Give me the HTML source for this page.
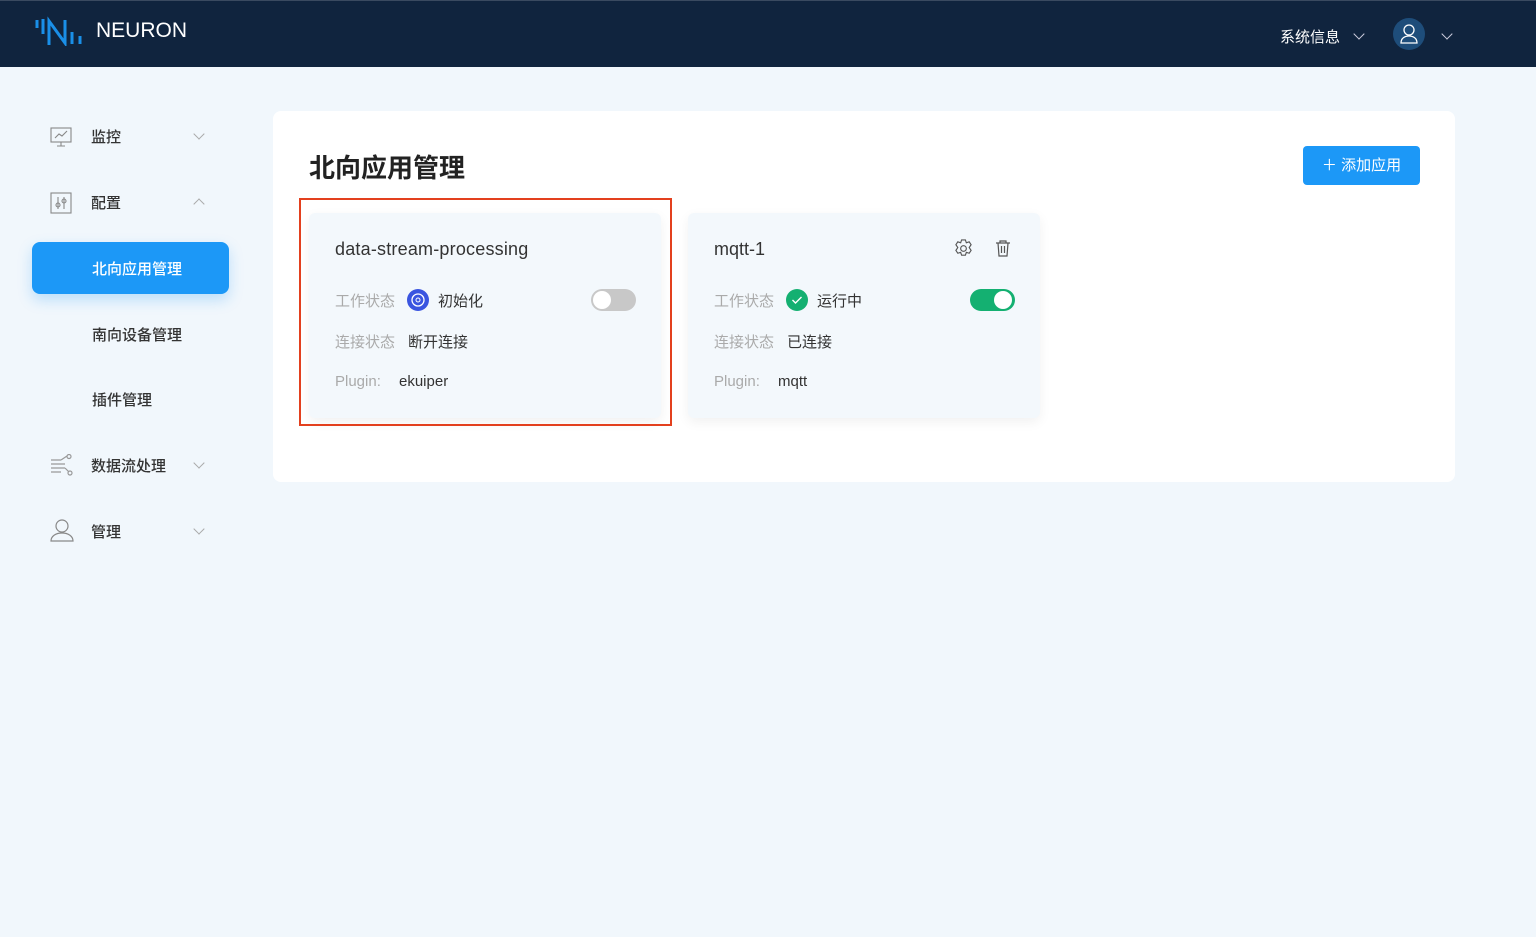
<!DOCTYPE html>
<html><head><meta charset="utf-8"><style>
*{box-sizing:border-box;margin:0;padding:0}
body{width:1536px;height:937px;background:#f1f7fc;font-family:"Liberation Sans","Noto Sans CJK SC",sans-serif;position:relative;overflow:hidden;color:#333}
.hdr{position:absolute;left:0;top:0;width:1536px;height:67px;background:#10243e;border-top:1px solid #3a4a60}
.abs{position:absolute}
.menu{position:absolute;left:91px;font-size:15px;color:#333;font-weight:500}
.chev{position:absolute;left:195px;width:8px;height:8px;border-right:1px solid #aaa;border-bottom:1px solid #aaa}
.panel{position:absolute;left:273px;top:111px;width:1182px;height:371px;background:#fff;border-radius:8px}
.card{position:absolute;top:213px;width:352px;height:205px;background:#f3f8fc;border-radius:6px;box-shadow:0 4px 12px rgba(0,0,0,0.06)}
.lbl{position:absolute;font-size:15px;color:#aaa}
.val{position:absolute;font-size:15px;color:#333}
</style></head><body>
<div class="hdr">
<svg class="abs" style="left:34px;top:15px" width="52" height="30" viewBox="0 0 52 30"><g stroke="#1a8fe8" stroke-width="3"><line x1="3" y1="4" x2="3" y2="12"/><line x1="9" y1="3" x2="9" y2="18"/><path d="M15 29V5L31 27V4" fill="none"/><line x1="38" y1="16" x2="38" y2="28"/><line x1="46" y1="20" x2="46" y2="28"/></g></svg>
<div class="abs" style="left:96px;top:18px;font-size:21px;color:#fff">NEURON</div>
<div class="abs" style="left:1280px;top:25px;font-size:15px;color:#fff">系统信息</div>
<div class="abs" style="left:1355px;top:29px;width:8px;height:8px;border-right:1.5px solid #ccd;border-bottom:1.5px solid #ccd;transform:rotate(45deg)"></div>
<div class="abs" style="left:1393px;top:17px;width:32px;height:32px;border-radius:50%;background:#1e4d7a"></div>
<svg class="abs" style="left:1399px;top:22px" width="20" height="22" viewBox="0 0 20 22" fill="none" stroke="#fff" stroke-width="1.3"><circle cx="10" cy="7" r="5"/><path d="M2 20c0-5 4-7 8-7s8 2 8 7z"/></svg>
<div class="abs" style="left:1443px;top:29px;width:8px;height:8px;border-right:1.5px solid #ccd;border-bottom:1.5px solid #ccd;transform:rotate(45deg)"></div>
</div>
<svg class="abs" style="left:50px;top:126px" width="22" height="22" viewBox="0 0 22 22" fill="none" stroke="#888" stroke-width="1.1"><rect x="1" y="2" width="20" height="14"/><path d="M5 12l4-4 3 2 5-5M7 20h8M11 16v4"/></svg>
<div class="menu" style="top:126px">监控</div><div class="chev" style="top:130px;transform:rotate(45deg)"></div>
<svg class="abs" style="left:50px;top:192px" width="22" height="22" viewBox="0 0 22 22" fill="none" stroke="#888" stroke-width="1.1"><rect x="1" y="1" width="20" height="20"/><path d="M8 5v12M14 5v12"/><circle cx="8" cy="13" r="2"/><circle cx="14" cy="9" r="2"/></svg>
<div class="menu" style="top:192px">配置</div><div class="chev" style="top:200px;transform:rotate(-135deg)"></div>
<div class="abs" style="left:32px;top:242px;width:197px;height:52px;background:#1c98f7;border-radius:8px;box-shadow:0 6px 14px rgba(28,152,247,0.25)"></div>
<div class="menu" style="left:92px;top:258px;color:#fff">北向应用管理</div>
<div class="menu" style="left:92px;top:324px">南向设备管理</div>
<div class="menu" style="left:92px;top:389px">插件管理</div>
<svg class="abs" style="left:50px;top:454px" width="24" height="24" viewBox="0 0 24 24" fill="none" stroke="#999" stroke-width="1.2"><path d="M1 6h10M1 10h14M1 14h14M1 18h10M11 6l6-4M15 14l4 4"/><circle cx="19" cy="2.5" r="2"/><circle cx="20" cy="19" r="2"/></svg>
<div class="menu" style="top:455px">数据流处理</div><div class="chev" style="top:459px;transform:rotate(45deg)"></div>
<svg class="abs" style="left:50px;top:518px" width="24" height="24" viewBox="0 0 24 24" fill="none" stroke="#888" stroke-width="1.2"><circle cx="12" cy="8" r="6"/><path d="M1 23c0-5 5-8 11-8s11 3 11 8z"/></svg>
<div class="menu" style="top:521px">管理</div><div class="chev" style="top:525px;transform:rotate(45deg)"></div>

<div class="panel"></div>
<div class="abs" style="left:309px;top:148px;font-size:26px;font-weight:bold;color:#222">北向应用管理</div>
<div class="abs" style="left:1303px;top:146px;width:117px;height:39px;background:#1c98f7;border-radius:4px;color:#fff;font-size:15px;line-height:39px;text-align:center">＋ 添加应用</div>

<div class="card" style="left:309px"></div>
<div class="abs" style="left:299px;top:198px;width:373px;height:228px;border:2px solid #e3401e"></div>
<div class="val" style="left:335px;top:239px;font-size:18px;letter-spacing:0.2px">data-stream-processing</div>
<div class="lbl" style="left:335px;top:290px">工作状态</div>
<div class="abs" style="left:407px;top:289px;width:22px;height:22px;border-radius:50%;background:#3a55e0"></div>
<svg class="abs" style="left:407px;top:289px" width="22" height="22"><circle cx="11" cy="11" r="6" fill="none" stroke="#fff" stroke-width="1.3"/><circle cx="11" cy="11" r="2" fill="none" stroke="#fff"/></svg>
<div class="val" style="left:438px;top:290px">初始化</div>
<div class="abs" style="left:591px;top:289px;width:45px;height:22px;border-radius:11px;background:#c8c8c8"></div>
<div class="abs" style="left:593px;top:291px;width:18px;height:18px;border-radius:50%;background:#fff"></div>
<div class="lbl" style="left:335px;top:331px">连接状态</div><div class="val" style="left:408px;top:331px">断开连接</div>
<div class="lbl" style="left:335px;top:373px">Plugin:</div><div class="val" style="left:399px;top:373px">ekuiper</div>

<div class="card" style="left:688px"></div>
<div class="val" style="left:714px;top:239px;font-size:18px">mqtt-1</div>
<svg class="abs" style="left:954px;top:239px" width="19" height="19" viewBox="0 0 20 20" fill="none" stroke="#555" stroke-width="1.2"><circle cx="10" cy="10" r="3"/><path d="M8 1h4l1 3 3-1 2 3-2 3 2 3-2 3-3-1-1 3H8l-1-3-3 1-2-3 2-3-2-3 2-3 3 1z"/></svg>
<svg class="abs" style="left:995px;top:240px" width="16" height="17" viewBox="0 0 16 17" fill="none" stroke="#555" stroke-width="1.2"><path d="M1 3h14M5 3V1h6v2M3 3l1 13h8l1-13M6.5 6v7M9.5 6v7"/></svg>
<div class="lbl" style="left:714px;top:290px">工作状态</div>
<div class="abs" style="left:786px;top:289px;width:22px;height:22px;border-radius:50%;background:#14b071"></div>
<svg class="abs" style="left:786px;top:289px" width="22" height="22"><path d="M6.5 11l3 3 6-6" fill="none" stroke="#fff" stroke-width="1.4"/></svg>
<div class="val" style="left:817px;top:290px">运行中</div>
<div class="abs" style="left:970px;top:289px;width:45px;height:22px;border-radius:11px;background:#14b071"></div>
<div class="abs" style="left:994px;top:291px;width:18px;height:18px;border-radius:50%;background:#fff"></div>
<div class="lbl" style="left:714px;top:331px">连接状态</div><div class="val" style="left:787px;top:331px">已连接</div>
<div class="lbl" style="left:714px;top:373px">Plugin:</div><div class="val" style="left:778px;top:373px">mqtt</div>
</body></html>
